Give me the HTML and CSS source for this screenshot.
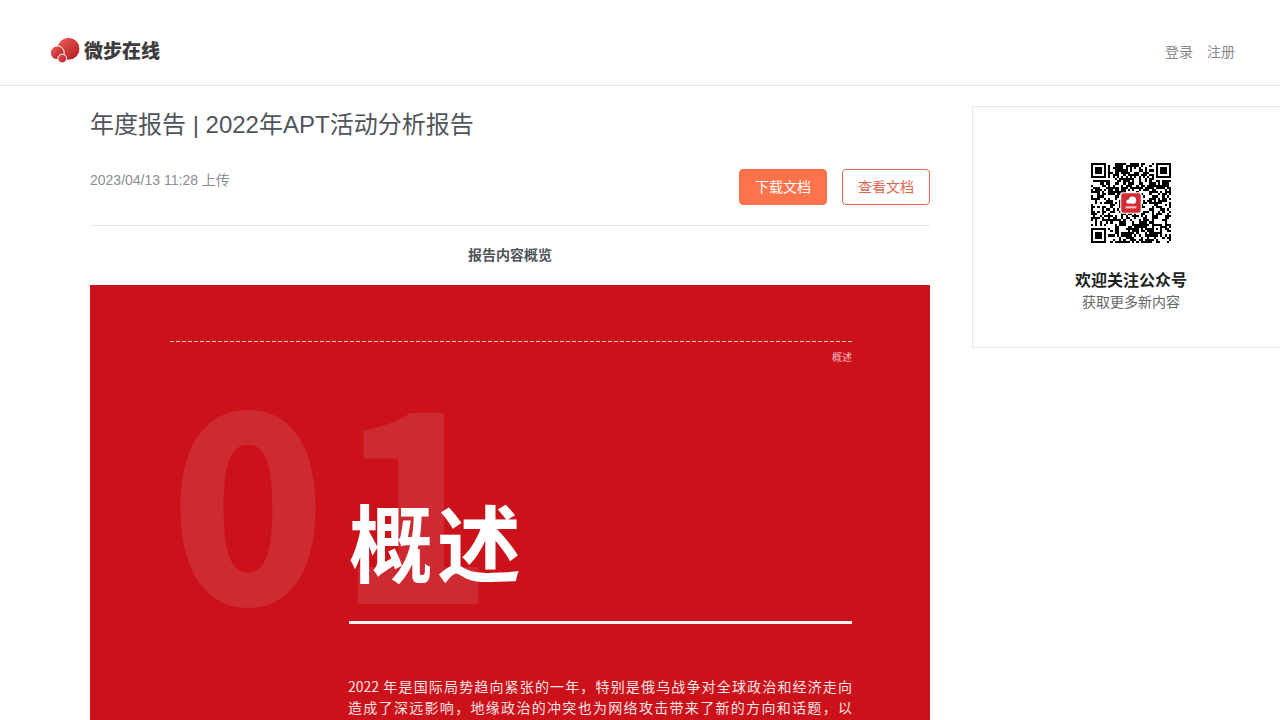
FILE: index.html
```html
<!DOCTYPE html>
<html lang="zh-CN">
<head>
<meta charset="utf-8">
<title>年度报告 | 2022年APT活动分析报告</title>
<link rel="stylesheet" href="styles.css">
</head>
<body>
<header class="header">
  <a class="logo" href="#">
    <svg class="logo-mark" viewBox="0 0 30 26" aria-hidden="true">
      <defs>
        <linearGradient id="ball" x1="0" y1="0" x2="1" y2="1">
          <stop offset="0" stop-color="#ee6257"/><stop offset="1" stop-color="#b01620"/>
        </linearGradient>
      </defs>
      <g fill="url(#ball)" stroke="#fff">
        <circle cx="18.5" cy="11.8" r="11.4"/>
        <circle cx="7.3" cy="15.8" r="6.9"/>
        <circle cx="12.2" cy="21.5" r="4.4"/>
      </g>
    </svg>
    <span class="logo-name">微步在线</span>
  </a>
  <nav class="account"><a href="#">登录</a><a href="#">注册</a></nav>
</header>
<div class="container">
  <main class="main">
    <h1 class="title">年度报告 | 2022年APT活动分析报告</h1>
    <div class="meta">
      <span class="date">2023/04/13 11:28 上传</span>
      <div class="actions">
        <button class="btn btn-primary" type="button">下载文档</button>
        <button class="btn btn-outline" type="button">查看文档</button>
      </div>
    </div>
    <h2 class="overview">报告内容概览</h2>
    <article class="sheet">
      <svg class="dashes" aria-hidden="true"><line x1="0" y1="0.5" x2="100%" y2="0.5"/></svg>
      <p class="running">概述</p>
      <div class="chapter">
        <div class="number" aria-hidden="true"><span>0</span><span>1</span></div>
        <h3 class="chapter-title"><span>概</span><span>述</span></h3>
      </div>
      <div class="chapter-body">
        <p>2022 年是国际局势趋向紧张的一年，特别是俄乌战争对全球政治和经济走向</p>
        <p>造成了深远影响，地缘政治的冲突也为网络攻击带来了新的方向和话题，以</p>
      </div>
    </article>
  </main>
  <aside class="follow">
    <svg class="qr" viewBox="0 0 37 37" role="img" aria-label="公众号二维码">
      <path id="modules" shape-rendering="crispEdges"/>
      <rect x="13.5" y="13.5" width="10" height="10" rx="1" fill="#fff"/>
      <rect x="14" y="14" width="9" height="9" rx="1" fill="#d22b34"/>
      <g fill="#fff"><circle cx="19.2" cy="17.2" r="1.7"/><circle cx="17.3" cy="17.9" r="1"/><path d="M16 20h5v1h-5z" opacity=".7"/></g>
    </svg>
    <strong class="follow-title">欢迎关注公众号</strong>
    <span class="follow-text">获取更多新内容</span>
  </aside>
</div>
<script src="qr.js"></script>
</body>
</html>
```
FILE: styles.css
```css
* { box-sizing: border-box; }
body {
  margin: 0;
  height: 100vh;
  overflow: hidden;
  background: #fff;
  color: #50555b;
  font: 14px/20px "Liberation Sans", "Noto Sans CJK SC", sans-serif;
}
a { color: inherit; text-decoration: none; }
h1, h2, h3, p { margin: 0; }

.header {
  display: flex;
  justify-content: space-between;
  align-items: center;
  height: 86px;
  padding: 15px 45px 0 50px;
  border-bottom: 1px solid #e8e8e8;
}
.logo { display: flex; align-items: center; gap: 4px; }
.logo-mark { width: 30px; height: 26px; }
.logo-name { font: 900 19px/26px "Noto Sans CJK SC", sans-serif; color: #3e3c3d; }
.account { display: flex; gap: 14px; padding-top: 4px; color: #888; }

.container {
  display: grid;
  grid-template-columns: 840px 318px;
  gap: 42px;
  align-items: start;
  padding: 20px 0 0 90px;
}
.title { font-size: 24px; line-height: 38px; font-weight: 400; }
.meta {
  display: flex;
  justify-content: space-between;
  align-items: flex-start;
  margin-top: 25px;
  padding-bottom: 20px;
  border-bottom: 1px solid #e8e8e8;
}
.date { line-height: 22px; color: #8c8c95; }
.actions { display: flex; gap: 15px; }
.btn {
  width: 88px;
  height: 36px;
  padding: 0;
  border: 1px solid #ff734c;
  border-radius: 4px;
  font: inherit;
  cursor: pointer;
}
.btn-primary { background: #ff734c; color: #fff; }
.btn-outline { background: #fff; border-color: #e9694f; color: #e0664e; }
.overview { padding: 19px 0 20px; text-align: center; font-size: 14px; line-height: 20px; font-weight: 700; }

.sheet {
  padding: 56px 78px 80px 80px;
  background: #cb121b;
  color: #fff;
  font-family: "Noto Sans CJK SC", sans-serif;
}
.dashes { display: block; width: 100%; height: 2px; }
.dashes line { stroke: #f6c9cb; stroke-width: 1; stroke-dasharray: 4 2; }
.running { padding-top: 6px; text-align: right; font-size: 10px; line-height: 16px; color: #f3b9bc; }
.chapter { display: grid; align-items: start; }
.number, .chapter-title { grid-area: 1 / 1; display: flex; }
.number { gap: 12px; font-size: 256px; line-height: 256px; font-weight: 900; color: #ce2a32; }
.chapter-title {
  gap: 4px;
  margin-left: 179px;
  padding: 111px 0 17px;
  font-size: 84px;
  line-height: 128px;
  font-weight: 700;
  border-bottom: 3px solid #fdf3f3;
}
.chapter-body { margin: 52px 0 0 178px; font-size: 14px; line-height: 21px; color: #fae3e4; }
.chapter-body p { text-align-last: justify; white-space: nowrap; }

.follow {
  display: flex;
  flex-direction: column;
  align-items: center;
  padding: 56px 0 35px;
  border: 1px solid #e8e8e8;
}
.qr { width: 80px; height: 80px; margin-bottom: 27px; }
.follow-title { font-size: 16px; line-height: 22px; color: #222; }
.follow-text { line-height: 20px; color: #666; }
```
FILE: qr.js
```js
const size = 37;
const finders = [[0, 0], [size - 7, 0], [0, size - 7]];
let seed = 20220413;

function data() {
  seed = (seed * 1103515245 + 12345) % 2147483648;
  return seed / 2147483648 < 0.55;
}

function square(x, y, cx, cy) {
  return Math.max(Math.abs(x - cx), Math.abs(y - cy));
}

function isDark(x, y) {
  const bit = data();
  for (const [fx, fy] of finders) {
    const d = square(x, y, fx + 3, fy + 3);
    if (d <= 4) return d === 3 || d <= 1;
  }
  const a = square(x, y, 30, 30);
  if (a <= 2) return a !== 1;
  if (x === 6 || y === 6) return (x + y) % 2 === 0;
  return bit;
}

let path = "";
for (let y = 0; y < size; y++) {
  for (let x = 0; x < size; x++) {
    if (isDark(x, y)) path += `M${x} ${y}h1v1h-1z`;
  }
}
document.getElementById("modules").setAttribute("d", path);
```
